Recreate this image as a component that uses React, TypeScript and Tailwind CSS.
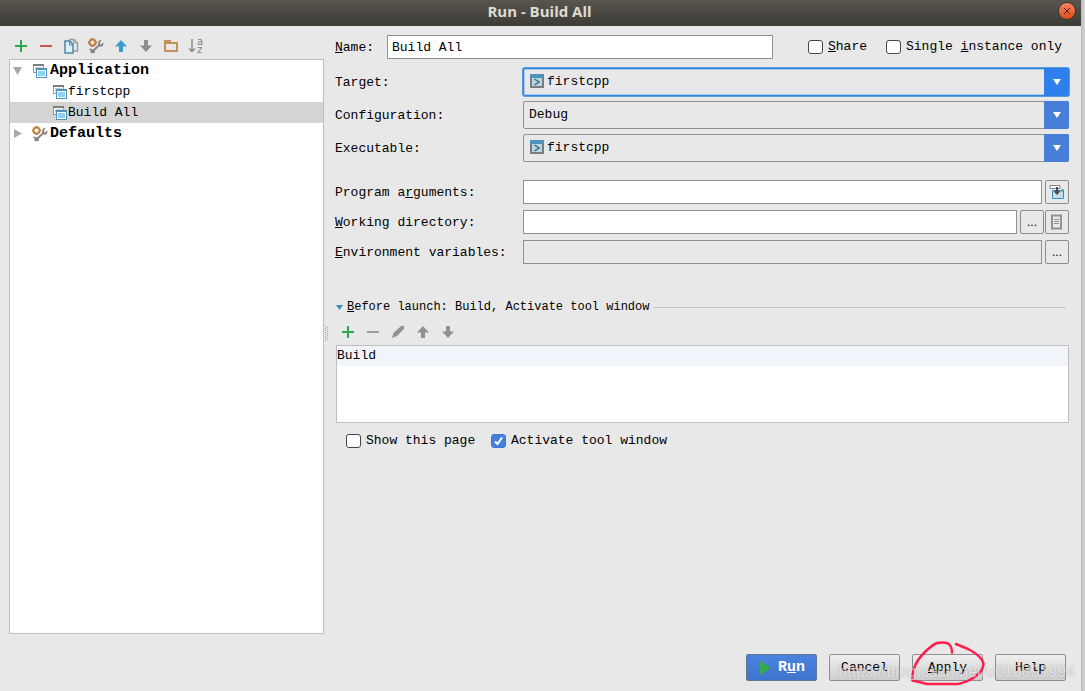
import { useState } from "react"
import type { ReactNode } from "react"

interface IconProps {
  className?: string
}

function PlusIcon() {
  return (
    <svg className="size-4" viewBox="0 0 16 16" fill="none">
      <path d="M8 2v12M2 8h12" stroke="#2da84f" strokeWidth="2" />
    </svg>
  )
}

function MinusIcon({ className }: IconProps) {
  return (
    <svg className={`size-4 ${className ?? ""}`} viewBox="0 0 16 16" fill="none">
      <path d="M2 8h12" stroke="currentColor" strokeWidth="2" />
    </svg>
  )
}

function ArrowIcon({ className }: IconProps) {
  return (
    <svg className={`size-4 ${className ?? ""}`} viewBox="0 0 16 16">
      <path d="M8 2l6 6.5h-4V14H6V8.500H2z" fill="currentColor" />
    </svg>
  )
}

function CopyIcon() {
  return (
    <svg className="size-4" viewBox="0 0 16 16" fill="none">
      <path d="M6 1.500h5L14.500 5v8H11" stroke="#9a9a9a" strokeWidth="1.500" />
      <path d="M10.500 1.500V5h4" stroke="#9a9a9a" />
      <path d="M2 3h5l3 3.500V15H2z" fill="#e3eef5" stroke="#4688ad" strokeWidth="1.500" />
      <path d="M6.500 3v4h3.500" stroke="#4688ad" />
    </svg>
  )
}

function WrenchIcon() {
  return (
    <svg className="size-4 shrink-0" viewBox="0 0 16 16" fill="none">
      {/* wrench head, handle, tail */}
      <path
        d="M12.500 1.500L10 4v3l-5 4.500-3-1-1 1 2 1.500-1 1 2 1.500 3-1v-2l4-4h3.500L15.500 6V4.500L13 6.500 11.500 5 13.500 2.500z"
        fill="#858585"
      />
      <circle cx="4.500" cy="4.500" r="3" stroke="#bd8342" strokeWidth="2" />
      <path d="M4.500 0v1M4.500 8v1M0 4.500h1M8 4.500h1" stroke="#bd8342" strokeWidth="2" />
    </svg>
  )
}

function FolderIcon() {
  return (
    <svg className="size-4" viewBox="0 0 16 16">
      <path d="M1 2h7v2h7v10H1zM3 6v6h10V6z" fill="#c0935a" fillRule="evenodd" />
    </svg>
  )
}

function SortIcon() {
  return (
    <svg className="size-4 overflow-visible" viewBox="0 0 16 16" fill="none">
      <path d="M4 1v12M1 10.500l3 3 3-3" stroke="#8a8a8a" strokeWidth="1.500" />
      <text x="9" y="7" fontSize="10" fontFamily="DejaVu Sans" fill="#808080">a</text>
      <text x="9" y="15" fontSize="10" fontFamily="DejaVu Sans" fill="#808080">z</text>
    </svg>
  )
}

function PencilIcon() {
  return (
    <svg className="size-4" viewBox="0 0 16 16">
      <path d="M2 14l1.500-5L10.500 2.500q1.500-1 3.500-.5.700 1.500-.5 3.500L7 12z" fill="#929292" />
    </svg>
  )
}

function AppIcon() {
  return (
    <svg className="h-[14px] w-[14px] shrink-0" viewBox="0 0 14 14" shapeRendering="crispEdges">
      <path d="M0 0h11v9H0z" fill="#999" />
      <path d="M0 0h11v2H0z" fill="#7d7d7d" />
      <path d="M1 2h9v6H1z" fill="#fff" />
      <path d="M2 3h7v4H2z" fill="#ccc" />
      <path d="M3 4h11v10H3z" fill="#4c94b9" />
      <path d="M4 6h9v7H4z" fill="#fff" />
      <path d="M5 7h7v5H5z" fill="#8fd1f1" />
    </svg>
  )
}

function TerminalIcon() {
  return (
    <svg className="h-[14px] w-[14px]" viewBox="0 0 14 14" fill="none">
      <path d="M0 0h14v14H0z" fill="#7c7c7c" />
      <path d="M0 0h14v4H0z" fill="#4e94b9" />
      <path d="M2 4h10v8H2z" fill="#b4d8ea" />
      <path d="M4.500 5l4.500 3-4.500 3" stroke="#4f6470" strokeWidth="1.500" />
    </svg>
  )
}

function InsertIcon() {
  return (
    <svg className="size-4" viewBox="0 0 16 16" fill="none">
      <path d="M1 1.500h10v3H1z" fill="#fff" stroke="#858585" />
      <path d="M3.500 6.500h11v8h-11z" fill="#c3dfee" stroke="#3e8dbb" />
      <path d="M12 5.500h3v2h-3z" fill="#3e8dbb" />
      <path d="M7 3h2v4h2.500L8 11 4.500 7H7z" fill="#4c4c4c" />
    </svg>
  )
}

function DocumentIcon() {
  return (
    <svg className="size-4" viewBox="0 0 16 16" fill="none">
      <path d="M3 1.500h9v13H3z" stroke="#929292" strokeWidth="2" />
      <path d="M5 5.500h5M5 7.500h5M5 9.500h5" stroke="#929292" />
    </svg>
  )
}

function ToolButton({ label, children }: { label: string; children: ReactNode }) {
  return (
    <button aria-label={label} className="flex h-[26px] w-[25px] items-center justify-center">
      {children}
    </button>
  )
}

function FieldButton({ label, children }: { label: string; children: ReactNode }) {
  return (
    <button
      aria-label={label}
      className="flex size-6 shrink-0 items-center justify-center rounded-xs border border-[#8c8c8c] bg-[#e8e8e8] font-['Liberation_Sans',sans-serif] text-[12px] leading-3"
    >
      {children}
    </button>
  )
}

interface ComboProps {
  id: string
  options: string[]
  icon?: boolean
  focused?: boolean
}

function Combo({ id, options, icon, focused }: ComboProps) {
  return (
    <div className="relative flex h-7 flex-1">
      {icon && (
        <span className="pointer-events-none absolute top-[6px] left-[7px]">
          <TerminalIcon />
        </span>
      )}
      <select
        id={id}
        className={`w-full appearance-none rounded-xs bg-[#e8e8e8] outline-none ${icon ? "pl-[23px]" : "pl-[5px]"} ${
          focused ? "border border-[#3584df] ring-1 ring-[#5b9be0] inset-ring-1 inset-ring-[#a9c8ea]" : "border border-[#919191]"
        }`}
      >
        {options.map((o) => (
          <option key={o}>{o}</option>
        ))}
      </select>
      <span
        className={`pointer-events-none absolute inset-y-0 right-0 flex w-[25px] items-center justify-center rounded-r-xs ${
          focused ? "bg-[#2f80ed]" : "bg-[#477ed8]"
        }`}
      >
        <svg className="h-[6px] w-2" viewBox="0 0 8 6">
          <path d="M0 0h8L4 6z" fill="#fff" />
        </svg>
      </span>
    </div>
  )
}

function Check({ checked, className, children }: { checked?: boolean; className?: string; children: ReactNode }) {
  const [on, setOn] = useState(!!checked)
  return (
    <label className={`flex items-center gap-[5px] whitespace-nowrap ${className ?? ""}`}>
      <span className="relative flex">
        <input
          type="checkbox"
          checked={on}
          onChange={() => setOn(!on)}
          className="h-[14px] w-[15px] appearance-none rounded-[3px] border border-[#454545] bg-white checked:border-[#3d76cf] checked:bg-[#447fdc]"
        />
        {on && (
          <svg className="pointer-events-none absolute inset-0 h-[14px] w-[15px]" viewBox="0 0 15 14" fill="none">
            <path d="M4 7.500l2.500 2.500L11 3.500" stroke="#fff" strokeWidth="2" />
          </svg>
        )}
      </span>
      <span>{children}</span>
    </label>
  )
}

function Tree() {
  return (
    <ul className="flex-1 border border-[#bfbfbf] bg-white">
      <li>
        <div className="flex h-[21px] items-center pl-[3px] text-[15px] font-bold">
          <svg className="mr-[11px] h-2 w-[9px]" viewBox="0 0 9 8">
            <path d="M0 0h9L4.500 8z" fill="#a8a8a8" />
          </svg>
          <AppIcon />
          <span className="ml-[3px]">Application</span>
        </div>
        <ul>
          <li className="flex h-[21px] items-center gap-px pl-[43px]">
            <AppIcon />
            firstcpp
          </li>
          <li className="flex h-[21px] items-center gap-px bg-[#d4d4d4] pl-[43px]">
            <AppIcon />
            Build All
          </li>
        </ul>
      </li>
      <li className="flex h-[21px] items-center pl-1 text-[15px] font-bold">
        <svg className="mr-[10px] h-[9px] w-2" viewBox="0 0 8 9">
          <path d="M0 0v9l8-4.500z" fill="#a8a8a8" />
        </svg>
        <WrenchIcon />
        <span className="ml-[2px]">Defaults</span>
      </li>
    </ul>
  )
}

const label = "w-[188px] shrink-0 whitespace-nowrap pt-[2px]"
const textField = "h-6 min-w-0 flex-1 border border-[#919191] px-1 outline-none"
const footerButton =
  "h-[27px] w-[71px] rounded-xs border border-[#8f8f8f] bg-linear-to-b from-[#efefef] to-[#cecece]"

export default function App() {
  const [name, setName] = useState("Build All")

  return (
    <div className="flex min-h-screen bg-[#c9c9c9] font-['Liberation_Mono',monospace] text-[13px] leading-5 text-black">
      <div className="flex min-w-0 flex-1 flex-col bg-[#e8e8e8]">
        {/* Title bar */}
        <header className="flex h-[26px] items-center bg-linear-to-b from-[#59564e] to-[#3d3b36] pr-[6px] pl-5">
          <h1 className="flex-1 pb-1 text-center font-['Open_Sans',sans-serif] text-[15px] font-bold text-[#dfdbd2]">
            Run - Build All
          </h1>
          <button
            aria-label="Close"
            className="mb-1 flex size-4 items-center justify-center rounded-full bg-linear-to-b from-[#f5835d] to-[#df4a16] ring-1 ring-[#35332e]"
          >
            <svg className="size-[6px]" viewBox="0 0 6 6">
              <path d="M0 0l6 6M6 0L0 6" stroke="#4a2416" />
            </svg>
          </button>
        </header>

        <main className="flex flex-1 pt-[7px] pr-3 pl-[9px]">
          {/* Configurations */}
          <section className="flex w-[315px] shrink-0 flex-col">
            <div className="-ml-px flex">
              <ToolButton label="Add"><PlusIcon /></ToolButton>
              <ToolButton label="Remove"><MinusIcon className="text-[#d1574a]" /></ToolButton>
              <ToolButton label="Copy"><CopyIcon /></ToolButton>
              <ToolButton label="Edit defaults"><WrenchIcon /></ToolButton>
              <ToolButton label="Move up"><ArrowIcon className="text-[#3d9dcb]" /></ToolButton>
              <ToolButton label="Move down"><ArrowIcon className="rotate-180 text-[#8d8d8d]" /></ToolButton>
              <ToolButton label="New folder"><FolderIcon /></ToolButton>
              <ToolButton label="Sort"><SortIcon /></ToolButton>
            </div>
            <Tree />
          </section>

          {/* Splitter grip */}
          <svg className="mr-[6px] h-[15px] w-[5px] shrink-0 self-center" viewBox="0 0 5 15" shapeRendering="crispEdges">
            <path d="M1.500 0v15M3.500 1v14" stroke="#a6a6a6" strokeDasharray="1 1" />
          </svg>

          {/* Settings */}
          <section className="min-w-0 flex-1 pt-[2px]">
            <div className="flex items-center">
              <label htmlFor="name" className="w-[52px] shrink-0 pt-[2px]">
                <u>N</u>ame:
              </label>
              <input
                id="name"
                value={name}
                onChange={(e) => setName(e.target.value)}
                className={`${textField} bg-white`}
              />
              <Check className="ml-[35px] w-[78px]"><u>S</u>hare</Check>
              <Check className="w-[183px]">Single <u>i</u>nstance only</Check>
            </div>

            <div className="mt-[9px] flex flex-col gap-[5px]">
              <div className="flex items-center">
                <label htmlFor="target" className={label}>Target:</label>
                <Combo id="target" options={["firstcpp", "Build All"]} icon focused />
              </div>
              <div className="flex items-center">
                <label htmlFor="configuration" className={label}>Configuration:</label>
                <Combo id="configuration" options={["Debug"]} />
              </div>
              <div className="flex items-center">
                <label htmlFor="executable" className={label}>Executable:</label>
                <Combo id="executable" options={["firstcpp"]} icon />
              </div>
            </div>

            <div className="mt-[18px] flex flex-col gap-[6px]">
              <div className="flex items-center">
                <label htmlFor="arguments" className={label}>Program a<u>r</u>guments:</label>
                <input id="arguments" className={`${textField} mr-[3px] bg-white`} />
                <FieldButton label="Insert macro"><InsertIcon /></FieldButton>
              </div>
              <div className="flex items-center">
                <label htmlFor="directory" className={label}><u>W</u>orking directory:</label>
                <input id="directory" className={`${textField} mr-[3px] bg-white`} />
                <div className="flex gap-px">
                  <FieldButton label="Browse directory">...</FieldButton>
                  <FieldButton label="Directory list"><DocumentIcon /></FieldButton>
                </div>
              </div>
              <div className="flex items-center">
                <label htmlFor="environment" className={label}><u>E</u>nvironment variables:</label>
                <input id="environment" readOnly className={`${textField} mr-[3px] bg-[#e8e8e8]`} />
                <FieldButton label="Edit variables">...</FieldButton>
              </div>
            </div>

            {/* Before launch */}
            <div className="mt-[33px] flex items-center text-[12px]">
              <button className="flex items-center gap-1 whitespace-nowrap">
                <svg className="ml-px h-[5px] w-[7px]" viewBox="0 0 7 5">
                  <path d="M0 0h7L3.500 5z" fill="#3f8fbd" />
                </svg>
                <span><u>B</u>efore launch: Build, Activate tool window</span>
              </button>
              <hr className="mr-[3px] ml-1 flex-1 border-[#c3c3c3]" />
            </div>
            <div className="mt-[2px] flex">
              <ToolButton label="Add task"><PlusIcon /></ToolButton>
              <ToolButton label="Remove task"><MinusIcon className="text-[#9c9c9c]" /></ToolButton>
              <ToolButton label="Edit task"><PencilIcon /></ToolButton>
              <ToolButton label="Move task up"><ArrowIcon className="text-[#929292]" /></ToolButton>
              <ToolButton label="Move task down"><ArrowIcon className="rotate-180 text-[#929292]" /></ToolButton>
            </div>
            <ul className="ml-px h-[78px] border border-[#bfbfbf] bg-white">
              <li className="bg-[#f1f4fa]">Build</li>
            </ul>
            <div className="mt-2 ml-[11px] flex">
              <Check className="w-[145px]">Show this page</Check>
              <Check checked>Activate tool window</Check>
            </div>
          </section>
        </main>

        <footer className="relative mt-5 flex justify-end gap-3 pr-[15px] pb-[10px]">
          <button className="flex h-[27px] w-[71px] items-center justify-center gap-1 rounded-xs border border-[#5f7696] bg-linear-to-b from-[#4a84df] to-[#3f74cc] text-[15px] font-bold text-white">
            <svg className="size-4" viewBox="0 0 16 16">
              <path d="M2 1v14l11-7z" fill="#36ab4b" />
            </svg>
            <span>R<u>u</u>n</span>
          </button>
          <button className={footerButton}>Cancel</button>
          <div className="relative">
            <button className={footerButton}><u>A</u>pply</button>
            <svg className="pointer-events-none absolute -top-[13px] -left-px h-[46px] w-[76px]" viewBox="0 0 76 46" fill="none">
              <path
                d="M41 11.500Q41 5 37 2.500 33 .8 26 2 21 4 14 11 6 19 4 25 1 32 1.500 39.500L8 41l8 2h31q9-2 15-6 8-5 10-11 1-4-1-7-4-6-14-11L45 3"
                stroke="#ff1f4f"
                strokeWidth="2.500"
                strokeLinecap="round"
                strokeLinejoin="round"
              />
            </svg>
          </div>
          <button className={footerButton}>Help</button>
          <span className="pointer-events-none absolute right-[6px] bottom-[9px] font-['Liberation_Sans',sans-serif] text-[16px] text-white/60 text-shadow-[0_0_2px_#00000040]">
            https://blog.csdn.net/u010801994
          </span>
        </footer>
      </div>
      {/* Window edge */}
      <div className="w-1 bg-linear-to-r from-[#bdbdbd] to-[#d6d6d6]" />
    </div>
  )
}
